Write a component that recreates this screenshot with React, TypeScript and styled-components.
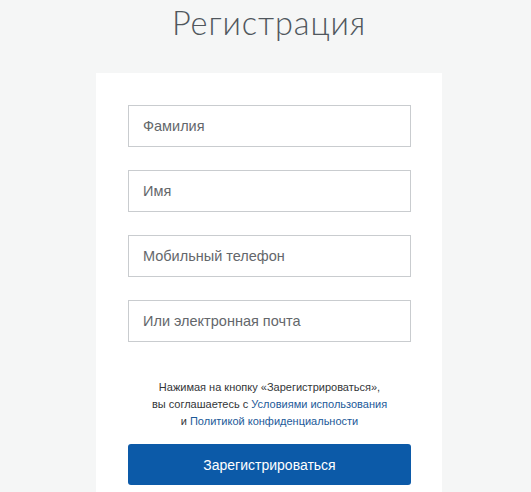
import React from 'react'
import styled, { createGlobalStyle } from 'styled-components'

const GlobalStyle = createGlobalStyle`
  html, body {
    margin: 0;
    padding: 0;
    background: #f5f6f6;
  }
  body {
    font-family: "Liberation Sans", Arial, sans-serif;
  }
`

const Page = styled.div`
  width: 531px;
  height: 492px;
  box-sizing: border-box;
  padding-left: 7px;
  overflow: hidden;
  display: flex;
  flex-direction: column;
  align-items: center;
`

const Title = styled.h1`
  flex-shrink: 0;
  margin: 0;
  height: 73px;
  font-family: Lato, sans-serif;
  font-weight: 300;
  font-size: 32.5px;
  line-height: 45px;
  color: #50575d;
  letter-spacing: 0.9px;
`

const Card = styled.form`
  flex-shrink: 0;
  width: 346px;
  box-sizing: border-box;
  background: #ffffff;
  padding: 32px 31px 32px 32px;
  display: flex;
  flex-direction: column;
`

const Fields = styled.div`
  display: flex;
  flex-direction: column;
  gap: 23px;
`

const Input = styled.input`
  height: 42px;
  box-sizing: border-box;
  border: 1px solid #c9cccf;
  border-radius: 0;
  padding: 0 14px;
  font-family: "Liberation Sans", Arial, sans-serif;
  font-size: 14.5px;
  color: #333;
  outline: none;
  &::placeholder {
    color: #64676b;
  }
`

const Agreement = styled.p`
  margin: 37px 0 0;
  text-align: center;
  font-size: 11px;
  line-height: 17px;
  color: #333638;
`

const Link = styled.a`
  color: #1c5a99;
  text-decoration: none;
`

const Submit = styled.button`
  margin-top: 14px;
  height: 41px;
  border: none;
  border-radius: 3px;
  background: #0c5aa8;
  color: #ffffff;
  font-family: "Liberation Sans", Arial, sans-serif;
  font-size: 14px;
  cursor: pointer;
`

const fields = ['Фамилия', 'Имя', 'Мобильный телефон', 'Или электронная почта']

const App = () => {
  return (
    <Page>
      <GlobalStyle />
      <Title>Регистрация</Title>
      <Card onSubmit={e => e.preventDefault()}>
        <Fields>
          {fields.map(f => (
            <Input key={f} type='text' placeholder={f} />
          ))}
        </Fields>
        <Agreement>
          Нажимая на кнопку «Зарегистрироваться»,<br />
          вы соглашаетесь с <Link href='#'>Условиями использования</Link><br />
          и <Link href='#'>Политикой конфиденциальности</Link>
        </Agreement>
        <Submit type='submit'>Зарегистрироваться</Submit>
      </Card>
    </Page>
  )
}

export default App
